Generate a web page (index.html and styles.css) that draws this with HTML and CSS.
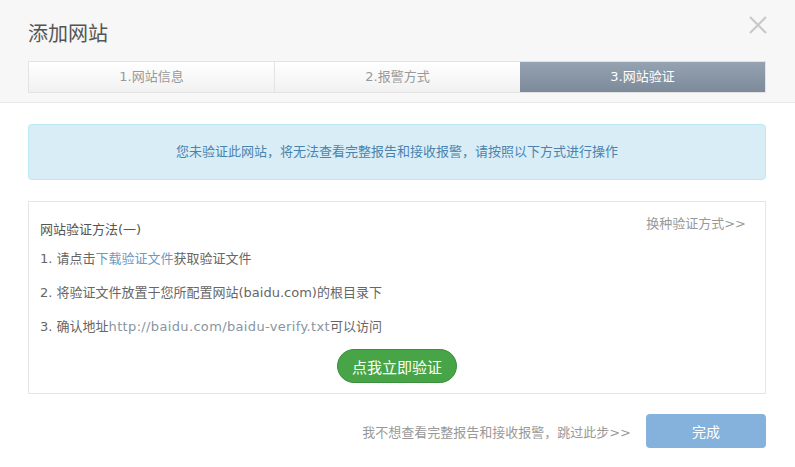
FILE: index.html
```html
<!DOCTYPE html>
<html lang="zh-CN">
<head>
  <meta charset="UTF-8" />
  <title>添加网站</title>
  <link rel="stylesheet" href="styles.css">
</head>
<body>
  <div class="dialog">
    <div class="dialog-head">
      <h2 class="dialog-title">添加网站</h2>
      <span class="close" title="关闭">
        <svg width="18" height="18" viewBox="0 0 18 18">
          <path d="M1 1 L17 17 M17 1 L1 17" stroke="#c8c8c8" stroke-width="2" fill="none" />
        </svg>
      </span>
      <div class="steps">
        <div class="step">1.网站信息</div>
        <div class="step">2.报警方式</div>
        <div class="step active">3.网站验证</div>
      </div>
    </div>

    <div class="dialog-body">
      <div class="alert-info">您未验证此网站，将无法查看完整报告和接收报警，请按照以下方式进行操作</div>

      <div class="verify-panel">
        <div class="panel-head">
          <span class="panel-title">网站验证方法(一)</span>
          <a class="switch-link" href="#">换种验证方式&gt;&gt;</a>
        </div>
        <ol class="verify-steps">
          <li>1. 请点击<a class="link" href="#">下载验证文件</a>获取验证文件</li>
          <li>2. 将验证文件放置于您所配置网站(baidu.com)的根目录下</li>
          <li>3. 确认地址<span class="url">http://baidu.com/baidu-verify.txt</span>可以访问</li>
        </ol>
        <div class="panel-actions">
          <button class="btn-verify">点我立即验证</button>
        </div>
      </div>

      <div class="dialog-foot">
        <a class="skip-link" href="#">我不想查看完整报告和接收报警，跳过此步&gt;&gt;</a>
        <button class="btn-done">完成</button>
      </div>
    </div>
  </div>
</body>
</html>
```

FILE: styles.css
```css
body {
  margin: 0;
  background: #fff;
  font-family: "DejaVu Sans", "Noto Sans CJK SC", sans-serif;
  font-size: 13px;
  color: #666;
}

a {
  text-decoration: none;
}

.dialog {
  width: 795px;
}

.dialog-head {
  position: relative;
  background: #f7f7f7;
  border-bottom: 1px solid #e8e8e8;
  padding: 19px 29px 0 28px;
  height: 83px;
}

.dialog-title {
  margin: 0;
  font-size: 20px;
  font-weight: normal;
  line-height: 28px;
  color: #555;
  font-family: "Noto Sans CJK SC", sans-serif;
}

.close {
  position: absolute;
  top: 16px;
  right: 28px;
  width: 18px;
  height: 18px;
  cursor: pointer;
}

.close svg {
  display: block;
}

.steps {
  display: flex;
  margin-top: 14px;
  border: 1px solid #e3e3e3;
  height: 30px;
}

.step {
  flex: 1;
  text-align: center;
  line-height: 30px;
  color: #999;
  background: linear-gradient(to bottom, #ffffff, #f1f1f1);
  border-left: 1px solid #e3e3e3;
}

.step:first-child {
  border-left: none;
}

.step.active {
  color: #fff;
  background: linear-gradient(to bottom, #94a2b1, #7c8a99);
  border-left: none;
}

.dialog-body {
  padding: 21px 29px 21px 28px;
}

.alert-info {
  background: #d9edf7;
  border: 1px solid #bce8f1;
  border-radius: 4px;
  height: 54px;
  line-height: 54px;
  text-align: center;
  color: #4a84ad;
}

.verify-panel {
  margin-top: 21px;
  border: 1px solid #e5e5e5;
  padding: 13px 19px 10px 11px;
}

.panel-head {
  display: flex;
  justify-content: space-between;
  align-items: flex-start;
  line-height: 18px;
  margin-bottom: 3px;
}

.panel-title {
  margin-top: 6px;
  color: #555;
}

.switch-link {
  color: #999;
}

.verify-steps {
  list-style: none;
  margin: 0;
  padding: 0;
}

.verify-steps li {
  line-height: 34px;
  color: #666;
}

.link {
  color: #6d9ac4;
}

.url {
  color: #8795a3;
  letter-spacing: 0.35px;
}

.panel-actions {
  display: flex;
  justify-content: center;
  margin-top: 5px;
  margin-left: 8px;
}

.btn-verify {
  width: 120px;
  height: 34px;
  border: 1px solid #3c8f3c;
  border-radius: 17px;
  background: #47a447;
  color: #fff;
  font-size: 15px;
  font-family: "Noto Sans CJK SC", sans-serif;
  cursor: pointer;
}

.dialog-foot {
  display: flex;
  justify-content: flex-end;
  align-items: center;
  gap: 15px;
  margin-top: 20px;
}

.skip-link {
  color: #999;
}

.btn-done {
  width: 120px;
  height: 34px;
  border: none;
  border-radius: 4px;
  background: #85b2dc;
  color: #fff;
  font-size: 14px;
  font-family: "Noto Sans CJK SC", sans-serif;
  cursor: pointer;
}
```
